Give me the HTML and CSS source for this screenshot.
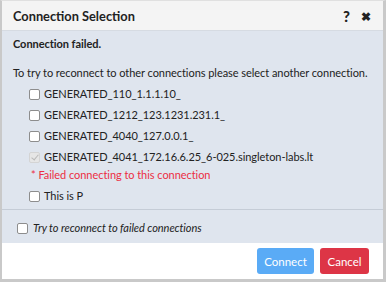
FILE: index.html
```html
<!DOCTYPE html>
<html>
<head>
<meta charset="utf-8">
<link rel="stylesheet" href="styles.css">
</head>
<body>
<div class="dialog">
  <div class="header">
    <span class="title">Connection Selection</span>
    <span class="tools"><span class="help">?</span><span class="close">&#x2716;</span></span>
  </div>
  <div class="body">
    <div class="failed">Connection failed.</div>
    <div class="intro">To try to reconnect to other connections please select another connection.</div>
    <ul class="list">
      <li><label class="opt"><input type="checkbox"><span>GENERATED_110_1.1.1.10_</span></label></li>
      <li><label class="opt"><input type="checkbox"><span>GENERATED_1212_123.1231.231.1_</span></label></li>
      <li><label class="opt"><input type="checkbox"><span>GENERATED_4040_127.0.0.1_</span></label></li>
      <li><label class="opt"><input type="checkbox" checked disabled><span>GENERATED_4041_172.16.6.25_6-025.singleton-labs.lt</span></label>
        <div class="err">* Failed connecting to this connection</div></li>
      <li><label class="opt"><input type="checkbox"><span>This is P</span></label></li>
    </ul>
    <div class="retry"><label class="opt"><input type="checkbox"><span>Try to reconnect to failed connections</span></label></div>
  </div>
  <div class="footer">
    <button class="btn connect">Connect</button>
    <button class="btn cancel">Cancel</button>
  </div>
</div>
</body>
</html>
```
FILE: styles.css
```css
* { box-sizing: border-box; }
html, body { margin: 0; padding: 0; background: #fff; }
body { font-family: Lato, "Open Sans", sans-serif; font-size: 11px; letter-spacing: -0.05px; color: #222; white-space: nowrap; }
.dialog {
  width: 386px; height: 282px;
  border-left: 2px solid #c9c9c9;
  border-right: 3px solid #c9c9c9;
  border-bottom: 3px solid #c9c9c9;
  border-top: 1px solid #e0e0e0;
  display: flex; flex-direction: column;
}
.header {
  height: 30px; background: #f4f4f4; border-bottom: 1px solid #d6dbe2;
  display: flex; align-items: center; justify-content: space-between;
  padding: 1px 12px 0 11px;
}
.title { font-weight: bold; font-size: 12.8px; letter-spacing: 0; color: #222; }
.tools { display: flex; align-items: center; gap: 11px; font-weight: 900; letter-spacing: 0; }
.help { font-size: 15px; color: #222; }
.close { font-size: 12px; color: #222; }
.body { background: #dfe5ee; flex: 0 0 212px; padding: 5px 0 0 0; }
.failed { font-weight: bold; padding: 0 11px; line-height: 16px; }
.intro { padding: 0 11px; margin-top: 13px; line-height: 16px; }
.list { list-style: none; margin: 5px 0 0 0; padding: 0 0 5px 27px; border-bottom: 1px solid #c5ccd6; }
.list li { margin-top: 5px; }
.opt { display: flex; align-items: center; line-height: 16px; }
.opt input {
  appearance: none; -webkit-appearance: none;
  margin: 0 4px 0 0; width: 11px; height: 11px;
  border: 1px solid #8d8d8d; border-radius: 2px; background: #fff; position: relative;
}
.opt input:checked::after {
  content: ""; position: absolute; left: 3px; top: 0px; width: 3px; height: 6px;
  border: solid #b9b9b9; border-width: 0 1.5px 1.5px 0; transform: rotate(40deg);
}
.opt input:disabled { border-color: #d4d4d4; background: #e6e6e6; }
.err { color: #ec2e44; padding-left: 2px; line-height: 16px; margin-top: 2px; }
.retry { padding: 10px 0 0 15px; font-style: italic; }
.retry .opt input { margin-right: 5px; }
.footer { flex: 1; background: #fff; display: flex; justify-content: flex-end; align-items: center; gap: 6px; padding: 0 14px 0 0; }
.btn { font-family: inherit; font-size: 11.5px; letter-spacing: 0; color: #fff; border: none; border-radius: 3px; height: 26px; padding: 0; }
.connect { background: #5aabf6; width: 57px; }
.cancel { background: #dd3546; width: 49px; }
```
